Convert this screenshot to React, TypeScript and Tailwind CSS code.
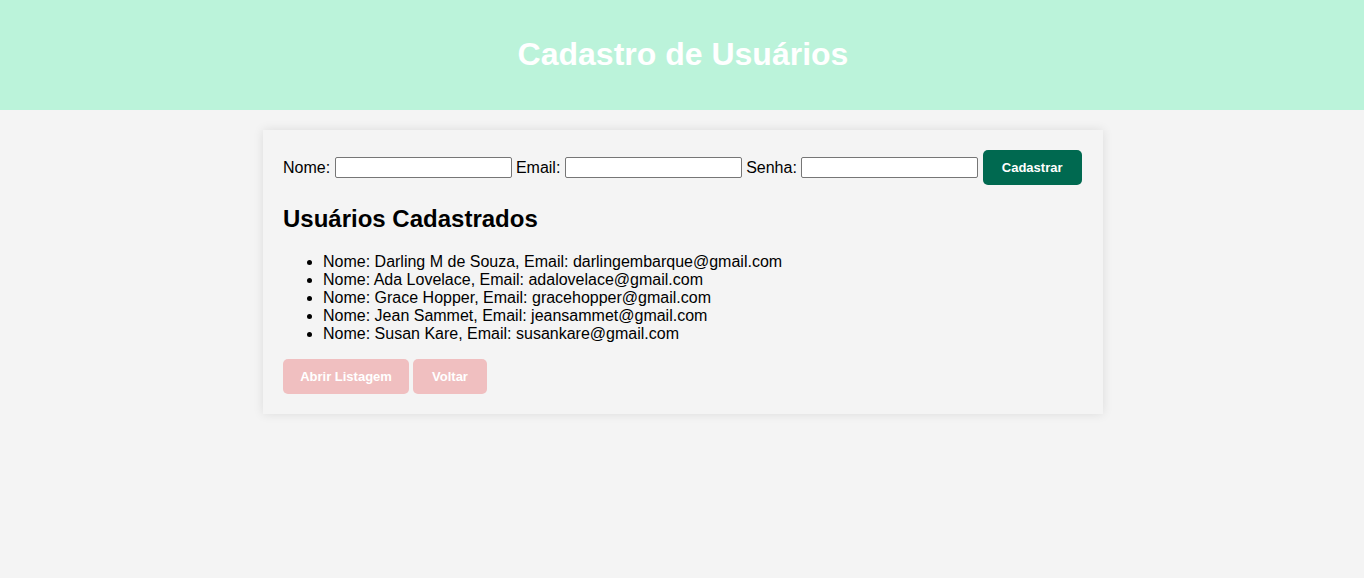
const users = [
  { nome: "Darling M de Souza", email: "darlingembarque@gmail.com" },
  { nome: "Ada Lovelace", email: "adalovelace@gmail.com" },
  { nome: "Grace Hopper", email: "gracehopper@gmail.com" },
  { nome: "Jean Sammet", email: "jeansammet@gmail.com" },
  { nome: "Susan Kare", email: "susankare@gmail.com" },
];

const App = () => {
  return (
    <div className="min-h-screen bg-[#f4f4f4] text-black font-['Liberation_Sans',Arial,sans-serif]">
      <header className="h-[110px] bg-[#bbf3da] flex items-center justify-center">
        <h1 className="text-[32px] font-bold text-white leading-[37px] -mt-[2px] ml-[2px]">Cadastro de Usuários</h1>
      </header>

      <div className="flex justify-center pl-[2px] pt-[20px]">
        <div className="w-[840px] bg-[#f4f4f4] p-5 shadow-[0_0_10px_rgba(0,0,0,0.1)]">
          <form className="flex items-center gap-[4.4px] text-base" onSubmit={(e) => e.preventDefault()}>
            <label>Nome:</label>
            <input type="text" className="w-[177px] h-[21px] bg-white border border-[#767676] rounded-[2px]" />
            <label>Email:</label>
            <input type="email" className="w-[177px] h-[21px] bg-white border border-[#767676] rounded-[2px]" />
            <label>Senha:</label>
            <input type="password" className="w-[177px] h-[21px] bg-white border border-[#767676] rounded-[2px]" />
            <button type="submit" className="h-[35px] w-[99px] bg-[#006950] text-white text-[13px] font-bold rounded-[5px]">
              Cadastrar
            </button>
          </form>

          <h2 className="text-2xl font-bold leading-[28px] mt-[20px] mb-[20px]">Usuários Cadastrados</h2>

          <ul className="list-disc pl-10 text-base leading-[18px]">
            {users.map((u) => (
              <li key={u.email}>
                Nome: {u.nome}, Email: {u.email}
              </li>
            ))}
          </ul>

          <div className="flex gap-1 mt-[16px]">
            <button className="h-[35px] w-[126px] bg-[#f0bfc0] text-white text-[13px] font-bold rounded-[5px]">
              Abrir Listagem
            </button>
            <button className="h-[35px] w-[74px] bg-[#f0bfc0] text-white text-[13px] font-bold rounded-[5px]">
              Voltar
            </button>
          </div>
        </div>
      </div>
    </div>
  );
};

export default App;
